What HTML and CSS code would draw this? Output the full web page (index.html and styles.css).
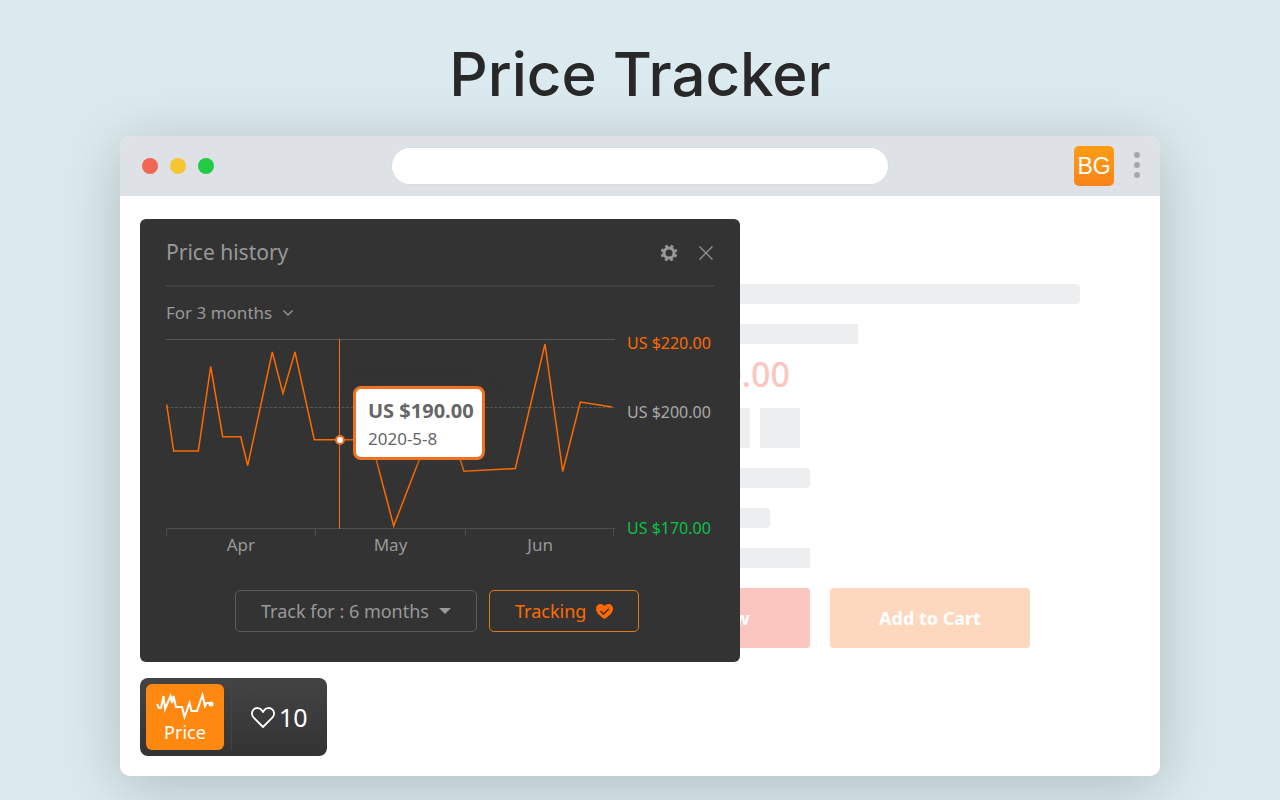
FILE: index.html
```html
<!DOCTYPE html>
<html lang="en">
<head>
  <meta charset="UTF-8">
  <meta name="viewport" content="width=device-width, initial-scale=1">
  <title>Price Tracker</title>
  <link rel="stylesheet" href="styles.css">
</head>

<body>
  <h1>Price Tracker</h1>

  <div class="browser">
    <header class="toolbar">
      <div class="lights">
        <span class="light red"></span>
        <span class="light yellow"></span>
        <span class="light green"></span>
      </div>
      <input class="address" type="text" aria-label="Address">
      <div class="toolbar-right">
        <button class="extension" type="button">BG</button>
        <button class="menu" type="button" aria-label="Menu">
          <svg width="6" height="28" viewBox="0 0 6 28" fill="#a8a8a8">
            <circle cx="3" cy="3" r="3"/>
            <circle cx="3" cy="13" r="3"/>
            <circle cx="3" cy="23" r="3"/>
          </svg>
        </button>
      </div>
    </header>

    <main class="page">
      <!-- product page -->
      <section class="product">
        <div class="bar bar-title"></div>
        <div class="bar bar-subtitle"></div>
        <div class="product-price">US $190.00</div>
        <div class="swatches">
          <span class="swatch"></span>
          <span class="swatch"></span>
          <span class="swatch"></span>
          <span class="swatch"></span>
        </div>
        <div class="bar bar-medium rounded"></div>
        <div class="bar bar-short rounded"></div>
        <div class="bar bar-medium"></div>
        <div class="buy-row">
          <button class="buy buy-now" type="button">Buy Now</button>
          <button class="buy add-cart" type="button">Add to Cart</button>
        </div>
      </section>

      <!-- extension overlay -->
      <div class="overlay">
        <section class="panel">
          <div class="panel-header">
            <h2>Price history</h2>
            <div class="panel-tools">
              <button class="icon-button" type="button" aria-label="Settings">
                <svg width="18" height="18" viewBox="0 0 18 18" fill="none" stroke="#999">
                  <circle cx="9" cy="9" r="5" stroke-width="3"/>
                  <circle cx="9" cy="9" r="7.2" stroke-width="2.4" stroke-dasharray="2.83 2.83" stroke-dashoffset="-1.4"/>
                </svg>
              </button>
              <button class="icon-button" type="button" aria-label="Close">
                <svg width="14" height="14" viewBox="0 0 14 14" fill="none" stroke="#999" stroke-width="1.2">
                  <path d="M.5 .5l13 13M13.5 .5l-13 13"/>
                </svg>
              </button>
            </div>
          </div>

          <div class="range">
            <select class="range-select" aria-label="Period">
              <option>For 3 months</option>
              <option>For 6 months</option>
            </select>
            <svg width="10" height="6" viewBox="0 0 10 6" fill="none" stroke="#999" stroke-width="1.3">
              <path d="M.5 .5L5 5L9.500 .5"/>
            </svg>
          </div>

          <div class="chart-row">
            <div class="chart">
              <svg class="plot" width="449" height="198" viewBox="0 0 449 198" fill="none">
                <path d="M0 .5H449" stroke="#585858"/>
                <path d="M0 68.500H449" stroke="#585858" stroke-dasharray="3 1.500"/>
                <path d="M.5 197V189.500H449M149.500 189.500V197M299.500 189.500V197M447.500 189.500V197" stroke="#4e4e4e"/>
                <path d="M.7 65.500L7.700 112H32.300L44.700 27.500L56.700 97.700H74.700L81.700 126.500L106.300 13L117 54.500L129 13L148.300 100.700H205L227.700 187L262 98H287L298 132.300L349.300 129.500L379 5L396.700 132.500L414.300 63L446 68" stroke="#ff6a00" stroke-width="1.500"/>
                <path d="M173.500 0V190" stroke="#f37021"/>
                <circle cx="174" cy="101" r="4" fill="#fff" stroke="#f37021" stroke-width="2"/>
              </svg>
              <div class="months">
                <span>Apr</span>
                <span>May</span>
                <span>Jun</span>
              </div>
              <div class="tooltip">
                <strong>US $190.00</strong>
                <span>2020-5-8</span>
              </div>
            </div>
            <div class="prices">
              <span class="high">US $220.00</span>
              <span class="current">US $200.00</span>
              <span class="low">US $170.00</span>
            </div>
          </div>

          <div class="actions">
            <div class="track-for">
              <select class="track-select" aria-label="Track for">
                <option>Track for : 6 months</option>
                <option>Track for : 3 months</option>
              </select>
              <svg width="12" height="6" viewBox="0 0 12 6" fill="#999"><path d="M0 0H12L6 6Z"/></svg>
            </div>
            <button class="tracking" type="button">
              Tracking
              <svg width="17" height="15" viewBox="0 0 17 15">
                <path d="M8.500 15C6 13.500 0 9.500 0 4.800C0 2 2 0 4.500 0C6.200 0 7.600 .9 8.500 2.200C9.400 .9 10.800 0 12.500 0C15 0 17 2 17 4.800C17 9.500 11 13.500 8.500 15Z" fill="#ff6a00"/>
                <path d="M4.500 7L7.500 10L12.800 5" fill="none" stroke="#333" stroke-width="1.500"/>
              </svg>
            </button>
          </div>
        </section>

        <div class="chip">
          <button class="price-button" type="button">
            <svg width="58" height="28" viewBox="0 0 58 28" fill="none" stroke="#fff" stroke-width="2" stroke-linejoin="miter">
              <path d="M1 12L3 16H5L7.500 4L9 17L14.500 4L16 11L17.500 4L20 15H26L28.500 25L33.500 11L35.500 19H41L46.500 3L49 14L50.500 11H54"/>
              <circle cx="55" cy="12" r="2.500" fill="#fff" stroke="none"/>
            </svg>
            Price
          </button>
          <button class="like-button" type="button">
            <svg width="24" height="21" viewBox="0 0 24 21" fill="none" stroke="#fff" stroke-width="1.800" stroke-linejoin="round">
              <path d="M12 20L2.700 10.700C.3 8.200 .4 4.700 2.500 2.600C5 .2 9.200 .5 11 3.500L12 5L13 3.500C14.800 .5 19 .2 21.500 2.600C23.600 4.700 23.700 8.200 21.300 10.700Z"/>
            </svg>
            10
          </button>
        </div>
      </div>
    </main>
  </div>
</body>
</html>
```
FILE: styles.css
```css
* {
  box-sizing: border-box;
}

body {
  margin: 0;
  padding: 0 20px 24px;
  background-color: #dbeaee;
  font-family: "Noto Sans", "Open Sans", sans-serif;
  color: #999;
}

button,
select,
input {
  margin: 0;
  padding: 0;
  border: none;
  background: none;
  color: inherit;
  font: inherit;
}

button,
select {
  cursor: pointer;
}

svg {
  display: block;
  flex-shrink: 0;
}

h1 {
  margin: 0;
  padding: 38px 0 26px;
  font-family: Inter, sans-serif;
  font-size: 60px;
  line-height: 72px;
  font-weight: 500;
  text-align: center;
  color: #282828;
}

.browser {
  max-width: 1040px;
  margin: 0 auto;
  border-radius: 10px;
  background-color: #fff;
  box-shadow: 0 10px 60px rgba(0, 0, 0, 0.2);
}

.toolbar {
  display: grid;
  grid-template-columns: 1fr 496px 1fr;
  align-items: center;
  height: 60px;
  padding: 0 20px;
  border-radius: 10px 10px 0 0;
  background-color: #dee1e6;
}

.lights {
  display: flex;
  gap: 12px;
  padding-left: 2px;
}

.light {
  width: 16px;
  height: 16px;
  border-radius: 50%;
}

.red {
  background-color: #f16753;
}

.yellow {
  background-color: #f7c632;
}

.green {
  background-color: #22cb44;
}

.address {
  height: 36px;
  padding: 0 18px;
  border-radius: 18px;
  background-color: #fff;
  box-shadow: 0 0 1px 1px #dddddf;
}

.toolbar-right {
  display: flex;
  align-items: center;
  justify-content: flex-end;
  gap: 20px;
}

.extension {
  width: 40px;
  height: 40px;
  border-radius: 5px;
  background: linear-gradient(#fd9d12, #f98419);
  font-family: "Liberation Sans", Arial, sans-serif;
  font-size: 23px;
  color: #fff;
}

/* product page */

.page {
  position: relative;
  min-height: 580px;
  padding: 88px 80px 128px 490px;
}

.product {
  display: flex;
  flex-direction: column;
  gap: 20px;
}

.bar {
  height: 20px;
  background-color: #edeef0;
}

.bar-title {
  border-radius: 4px;
}

.bar-subtitle {
  width: 248px;
}

.bar-medium {
  width: 200px;
}

.bar-short {
  width: 160px;
}

.rounded {
  border-radius: 4px;
}

.product-price {
  width: 180px;
  height: 24px;
  line-height: 20px;
  font-size: 34px;
  font-weight: 500;
  text-align: right;
  white-space: nowrap;
  color: #fbc5c0;
}

.swatches {
  display: flex;
  gap: 10px;
}

.swatch {
  width: 40px;
  height: 40px;
  background-color: #edeef0;
}

.buy-row {
  display: flex;
  gap: 20px;
}

.buy {
  width: 200px;
  height: 60px;
  border-radius: 4px;
  font-size: 18px;
  font-weight: 700;
  color: #fff;
}

.buy-now {
  background-color: #fbc5c0;
}

.add-cart {
  background-color: #fed7bf;
}

/* overlay */

.overlay {
  position: absolute;
  top: 23px;
  left: 20px;
  display: flex;
  flex-direction: column;
  align-items: flex-start;
  gap: 16px;
}

.panel {
  width: 600px;
  padding: 0 26px 30px;
  border-radius: 6px;
  background-color: #333;
}

.panel-header {
  display: flex;
  align-items: center;
  justify-content: space-between;
  height: 68px;
  border-bottom: 2px solid #404040;
}

h2 {
  margin: 0;
  font-size: 21px;
  font-weight: 400;
}

.panel-tools {
  display: flex;
  align-items: center;
  gap: 21px;
  padding: 2px 1px 0 0;
}

.range {
  display: flex;
  align-items: center;
  height: 52px;
}

/* the arrow is drawn over the right end of the select */
.range-select,
.track-select {
  appearance: none;
  margin-right: -12px;
  padding-right: 22px;
  line-height: 24px;
}

.range-select {
  font-size: 17px;
}

.track-select {
  font-size: 18px;
}

.range svg,
.track-for svg {
  pointer-events: none;
}

.chart-row {
  display: flex;
  gap: 12px;
}

.chart {
  position: relative;
  width: 449px;
}

.months {
  display: grid;
  grid-template-columns: repeat(3, 1fr);
  margin-top: -2px;
  font-size: 17px;
  line-height: 20px;
  text-align: center;
}

.tooltip {
  position: absolute;
  top: 47px;
  left: 187px;
  display: flex;
  flex-direction: column;
  width: 132px;
  height: 74px;
  padding: 8px 0 0 12px;
  border: 3px solid #f37021;
  border-radius: 8px;
  background-color: #fff;
  box-shadow: 0 4px 20px rgba(60, 60, 60, 0.4);
  color: #666;
}

.tooltip strong {
  font-size: 20px;
  line-height: 28px;
}

.tooltip span {
  font-size: 17px;
  line-height: 28px;
}

.prices {
  display: flex;
  flex-direction: column;
  font-size: 16px;
  line-height: 20px;
  white-space: nowrap;
}

.high {
  margin: -6px 0 49px;
  color: #ff6a00;
}

.current {
  margin-bottom: 96px;
  color: #aaa;
}

.low {
  color: #0ac245;
}

.actions {
  display: flex;
  gap: 12px;
  margin-top: 35px;
  padding-left: 69px;
}

.track-for {
  display: flex;
  align-items: center;
  width: 242px;
  height: 42px;
  padding-left: 25px;
  border: 1px solid #5c5c5c;
  border-radius: 5px;
}

.tracking {
  display: flex;
  align-items: center;
  gap: 10px;
  width: 150px;
  height: 42px;
  padding-left: 25px;
  border: 1px solid #e07b1c;
  border-radius: 5px;
  font-size: 18px;
  color: #ff6a00;
}

.chip {
  display: flex;
  width: 187px;
  height: 78px;
  padding: 6px;
  border-radius: 8px;
  background: linear-gradient(#444, #333);
  color: #fff;
}

.price-button {
  display: flex;
  flex-direction: column;
  align-items: center;
  width: 78px;
  height: 66px;
  padding-top: 8px;
  border-radius: 6px;
  background-color: #ff8910;
  font-size: 18px;
  line-height: 24px;
}

.like-button {
  display: flex;
  align-items: center;
  gap: 4px;
  margin-left: 7px;
  padding-left: 19px;
  border-left: 1px solid #444;
  font-size: 25px;
}
```
